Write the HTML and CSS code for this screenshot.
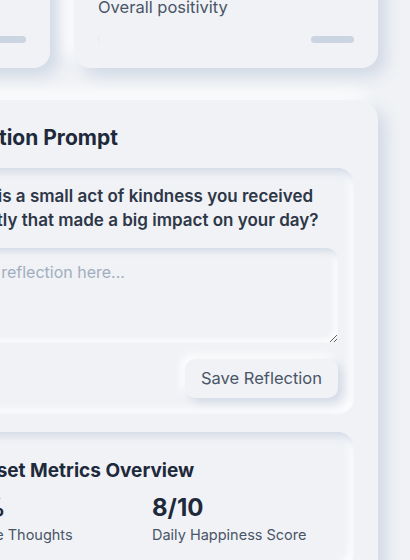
FILE: index.html
```html
<!DOCTYPE html>
<html lang="en">
<head>
<meta charset="utf-8">
<title>Mindset Dashboard</title>
<link rel="stylesheet" href="styles.css">
</head>
<body>
<div class="page">
  <section class="stats-row">
    <div class="stat-card">
      <div class="stat-value">12</div>
      <div class="stat-label">Reflections logged</div>
      <div class="stat-foot"><span class="track"></span><span class="pill"></span></div>
    </div>
    <div class="stat-card">
      <div class="stat-value">78%</div>
      <div class="stat-label">Overall positivity</div>
      <div class="stat-foot"><span class="track"></span><span class="pill"></span></div>
    </div>
  </section>
  <section class="main-grid">
    <aside class="side"></aside>
    <div class="panel">
      <h2 class="panel-title">Reflection Prompt</h2>
      <div class="well prompt">
        <p class="question">What is a small act of kindness you received recently that made a big impact on your day?</p>
        <textarea class="reflection" placeholder="Your reflection here..."></textarea>
        <div class="actions"><button class="save-btn" type="button">Save Reflection</button></div>
      </div>
      <div class="well metrics">
        <h3 class="metrics-title">Mindset Metrics Overview</h3>
        <div class="metric-grid">
          <div class="metric">
            <div class="m-value">85%</div>
            <div class="m-label">Positive Thoughts</div>
          </div>
          <div class="metric">
            <div class="m-value">8/10</div>
            <div class="m-label">Daily Happiness Score</div>
          </div>
        </div>
      </div>
    </div>
  </section>
</div>
</body>
</html>
```

FILE: styles.css
```css
html, body {
  margin: 0;
  padding: 0;
}
body {
  background: #f0f2f5;
  font-family: Inter, "Open Sans", "Liberation Sans", sans-serif;
  color: #1e293b;
  height: 560px;
  overflow: hidden;
}
.page {
  width: 632px;
  margin-left: -254px;
  margin-top: -75px;
}
.stats-row {
  display: grid;
  grid-template-columns: 304px 304px;
  gap: 24px;
}
.stat-card {
  background: #f0f2f5;
  border-radius: 16px;
  padding: 24px 24px 25px;
  box-shadow: 8px 8px 16px #d1d9e6, -8px -8px 16px #ffffff;
}
.stat-value {
  font-size: 32px;
  font-weight: 700;
  line-height: 40px;
  margin-bottom: 6px;
}
.stat-label {
  font-size: 16.5px;
  line-height: 24px;
  color: #4a5568;
  margin-bottom: 17px;
}
.stat-foot {
  display: flex;
  justify-content: space-between;
  align-items: center;
  height: 7px;
}
.track {
  width: 4px;
  height: 7px;
  border-radius: 4px 0 0 4px;
  border-left: 1px solid #e6e9ee;
}
.pill {
  width: 43px;
  height: 7px;
  border-radius: 4px;
  background: #cbd5e1;
}
.main-grid {
  display: grid;
  grid-template-columns: 140px 468px;
  gap: 24px;
  margin-top: 32px;
  align-items: start;
}
.panel {
  background: #f0f2f5;
  border-radius: 20px;
  padding: 24px;
  box-shadow: 8px 8px 16px #d1d9e6, -8px -8px 16px #ffffff;
}
.panel-title {
  margin: 0 0 16px;
  font-size: 21px;
  line-height: 28px;
  font-weight: 700;
  color: #1e293b;
}
.well {
  border-radius: 16px;
  padding: 16px;
  box-shadow: inset 4px 4px 8px #d1d9e6, inset -4px -4px 8px #ffffff;
}
.question {
  margin: 0 0 16px;
  font-size: 17px;
  line-height: 24px;
  font-weight: 600;
  color: #2d3748;
}
.reflection {
  display: block;
  width: 100%;
  box-sizing: border-box;
  height: 95px;
  padding: 12px;
  border: none;
  border-radius: 12px;
  background: #f0f2f5;
  box-shadow: inset 3px 3px 6px #d1d9e6, inset -3px -3px 6px #ffffff;
  font-family: inherit;
  font-size: 16px;
  line-height: 24px;
  color: #2d3748;
  resize: vertical;
  outline: none;
}
.reflection::placeholder {
  color: #a0aec0;
}
.actions {
  display: flex;
  justify-content: flex-end;
  margin-top: 16px;
}
.save-btn {
  font-family: inherit;
  font-size: 16.5px;
  line-height: 23px;
  padding: 8px 16px;
  border: none;
  border-radius: 10px;
  background: #f0f2f5;
  color: #4a5568;
  box-shadow: 4px 4px 8px #d1d9e6, -4px -4px 8px #ffffff;
}
.metrics {
  margin-top: 18px;
  padding: 26px 16px 24px;
}
.metrics-title {
  margin: 0 0 9px;
  font-size: 19px;
  line-height: 26px;
  font-weight: 700;
  color: #1e293b;
}
.metric-grid {
  display: grid;
  grid-template-columns: 1fr 1fr;
  gap: 16px;
}
.m-value {
  font-size: 24px;
  font-weight: 700;
  line-height: 30px;
  margin-bottom: 2px;
  color: #1e293b;
}
.m-label {
  font-size: 14.5px;
  line-height: 20px;
  color: #4a5568;
}
```
